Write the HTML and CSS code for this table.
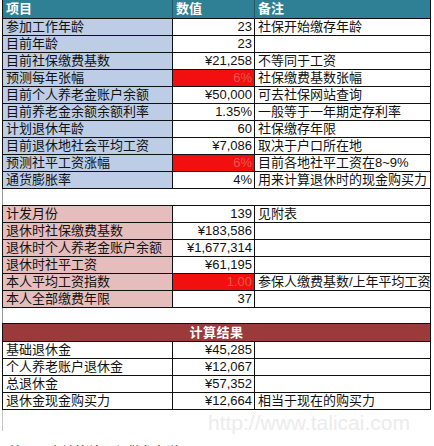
FILE: index.html
```html
<!DOCTYPE html>
<html lang="zh-CN">
<head>
<meta charset="utf-8">
<title>养老金计算</title>
<link rel="stylesheet" href="styles.css">
</head>
<body>
<div class="page">
  <div class="row head">
    <div class="cell">项目</div>
    <div class="cell">数值</div>
    <div class="cell">备注</div>
  </div>
  <div class="row blue">
    <div class="cell label">参加工作年龄</div><div class="cell val">23</div><div class="cell note">社保开始缴存年龄</div>
  </div>
  <div class="row blue">
    <div class="cell label">目前年龄</div><div class="cell val">23</div><div class="cell note"></div>
  </div>
  <div class="row blue">
    <div class="cell label">目前社保缴费基数</div><div class="cell val">¥21,258</div><div class="cell note">不等同于工资</div>
  </div>
  <div class="row blue">
    <div class="cell label">预测每年张幅</div><div class="cell val red">6%</div><div class="cell note">社保缴费基数张幅</div>
  </div>
  <div class="row blue">
    <div class="cell label">目前个人养老金账户余额</div><div class="cell val">¥50,000</div><div class="cell note">可去社保网站查询</div>
  </div>
  <div class="row blue">
    <div class="cell label">目前养老金余额余额利率</div><div class="cell val">1.35%</div><div class="cell note">一般等于一年期定存利率</div>
  </div>
  <div class="row blue">
    <div class="cell label">计划退休年龄</div><div class="cell val">60</div><div class="cell note">社保缴存年限</div>
  </div>
  <div class="row blue">
    <div class="cell label">目前退休地社会平均工资</div><div class="cell val">¥7,086</div><div class="cell note">取决于户口所在地</div>
  </div>
  <div class="row blue">
    <div class="cell label">预测社平工资涨幅</div><div class="cell val red">6%</div><div class="cell note">目前各地社平工资在8~9%</div>
  </div>
  <div class="row blue">
    <div class="cell label">通货膨胀率</div><div class="cell val">4%</div><div class="cell note">用来计算退休时的现金购买力</div>
  </div>

  <div class="gap gap1"></div>

  <div class="row pink top">
    <div class="cell label">计发月份</div><div class="cell val">139</div><div class="cell note">见附表</div>
  </div>
  <div class="row pink">
    <div class="cell label">退休时社保缴费基数</div><div class="cell val">¥183,586</div><div class="cell note"></div>
  </div>
  <div class="row pink">
    <div class="cell label">退休时个人养老金账户余额</div><div class="cell val">¥1,677,314</div><div class="cell note"></div>
  </div>
  <div class="row pink">
    <div class="cell label">退休时社平工资</div><div class="cell val">¥61,195</div><div class="cell note"></div>
  </div>
  <div class="row pink">
    <div class="cell label">本人平均工资指数</div><div class="cell val red">1.00</div><div class="cell note">参保人缴费基数/上年平均工资</div>
  </div>
  <div class="row pink">
    <div class="cell label">本人全部缴费年限</div><div class="cell val">37</div><div class="cell note"></div>
  </div>

  <div class="gap gap2"></div>

  <div class="row result-head top">
    <div class="cell span">计算结果</div>
  </div>
  <div class="row">
    <div class="cell label">基础退休金</div><div class="cell val">¥45,285</div><div class="cell note"></div>
  </div>
  <div class="row">
    <div class="cell label">个人养老账户退休金</div><div class="cell val">¥12,067</div><div class="cell note"></div>
  </div>
  <div class="row">
    <div class="cell label">总退休金</div><div class="cell val">¥57,352</div><div class="cell note"></div>
  </div>
  <div class="row">
    <div class="cell label">退休金现金购买力</div><div class="cell val">¥12,664</div><div class="cell note">相当于现在的购买力</div>
  </div>

  <div class="tail"></div>
  <div class="footnote">注：以上计算结果仅供参考说明</div>
  <div class="watermark">http://www.talicai.com</div>
</div>
</body>
</html>
```

FILE: styles.css
```css
html, body {
  margin: 0;
  padding: 0;
  background: #ffffff;
}

body {
  font-family: "Liberation Sans", "Noto Sans CJK SC", Arial, sans-serif;
  font-size: 13px;
  color: #111111;
  overflow: hidden;
}

.page {
  position: relative;
  padding-left: 2px;
  height: 446px;
  overflow: hidden;
}

.row {
  display: grid;
  grid-template-columns: 170px 82px 176px;
  width: 429px;
  box-sizing: border-box;
  border-left: 1px solid #111;
}

.row.top {
  border-top: 1px solid #111;
}

.cell {
  box-sizing: border-box;
  height: 17px;
  line-height: 16px;
  border-right: 1px solid #111;
  border-bottom: 1px solid #111;
  white-space: nowrap;
  overflow: hidden;
  background: #ffffff;
}

.label {
  padding-left: 3px;
}

.val {
  text-align: right;
  padding-right: 2px;
}

.note {
  padding-left: 3px;
}

.val.red {
  background: #f10f0f;
  color: #e55a4e;
}

.blue .label {
  background: #bccde5;
}

.pink .label {
  background: #e5bdbd;
}

.head .cell {
  height: 19px;
  line-height: 18px;
  background: #2f7f95;
  color: #ffffff;
  font-weight: bold;
  padding-left: 3px;
  border-right-color: #1f5767;
}

.head .cell:last-child {
  border-right-color: #111;
}

.result-head .span {
  grid-column: 1 / 4;
  height: 18px;
  line-height: 17px;
  background: #9a3a3a;
  color: #ffffff;
  font-weight: bold;
  text-align: center;
  letter-spacing: 0.5px;
}

.gap {
  width: 429px;
  box-sizing: border-box;
  border-left: 1px solid #9a9a9a;
  border-right: 1px solid #111;
}

.gap1 {
  height: 16px;
}

.gap2 {
  height: 15px;
}

.tail {
  width: 1px;
  height: 21px;
  border-left: 1px solid #c4c4c4;
  box-sizing: border-box;
}

.footnote {
  padding-left: 8px;
  margin-top: 12px;
  line-height: 16px;
  font-family: "Noto Sans CJK SC", sans-serif;
  font-size: 13px;
  color: #222;
  white-space: nowrap;
}

.watermark {
  position: absolute;
  left: 208px;
  top: 411px;
  font-family: "Liberation Sans", Arial, sans-serif;
  font-size: 21px;
  line-height: 24px;
  color: #ececec;
  white-space: nowrap;
}
```
